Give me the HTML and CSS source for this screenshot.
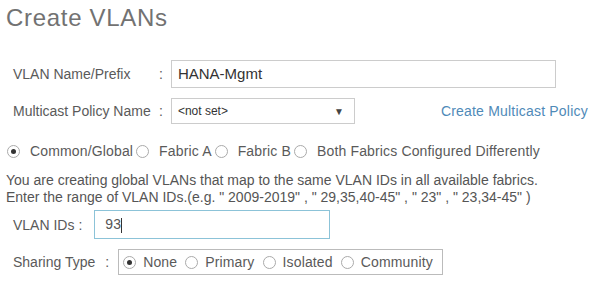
FILE: index.html
```html
<!DOCTYPE html>
<html>
<head>
    <title>Create VLANs</title>
    <link rel="stylesheet" href="styles.css">
</head>
<body>
    <div class="page">
        <h1 class="title">Create VLANs</h1>

        <div class="form-row name-row">
            <span class="field-label wide">VLAN Name/Prefix</span>
            <span class="colon">:</span>
            <div class="text-input name-input">HANA-Mgmt</div>
        </div>

        <div class="form-row policy-row">
            <span class="field-label wide">Multicast Policy Name</span>
            <span class="colon">:</span>
            <div class="select-input">
                <span>&lt;not set&gt;</span>
                <span class="arrow">&#9660;</span>
            </div>
            <a class="link" href="#">Create Multicast Policy</a>
        </div>

        <div class="radio-row scope-row">
            <span class="radio checked"></span><span class="radio-text">Common/Global</span>
            <span class="radio"></span><span class="radio-text">Fabric A</span>
            <span class="radio"></span><span class="radio-text">Fabric B</span>
            <span class="radio"></span><span class="radio-text">Both Fabrics Configured Differently</span>
        </div>

        <p class="note">
            You are creating global VLANs that map to the same VLAN IDs in all available fabrics.<br>
            Enter the range of VLAN IDs.(e.g. " 2009-2019" , " 29,35,40-45" , " 23" , " 23,34-45" )
        </p>

        <div class="form-row ids-row">
            <span class="field-label">VLAN IDs</span>
            <span class="colon">:</span>
            <div class="text-input ids-input">93<span class="caret"></span></div>
        </div>

        <div class="form-row sharing-row">
            <span class="field-label">Sharing Type</span>
            <span class="colon">:</span>
            <div class="radio-box">
                <span class="radio checked"></span><span class="radio-text">None</span>
                <span class="radio"></span><span class="radio-text">Primary</span>
                <span class="radio"></span><span class="radio-text">Isolated</span>
                <span class="radio"></span><span class="radio-text">Community</span>
            </div>
        </div>
    </div>
</body>
</html>
```

FILE: styles.css
```css
body {
    margin: 0;
    background-color: #fff;
    font-family: "Liberation Sans", Arial, sans-serif;
    color: #5a5a5a;
}

.page {
    padding: 0 0 0 6px;
}

.title {
    margin: 0;
    padding-top: 4px;
    font-size: 24px;
    font-weight: normal;
    color: #727272;
    letter-spacing: 0.7px;
    line-height: 28px;
}

.form-row {
    display: flex;
    align-items: center;
    font-size: 14px;
}

.field-label {
    padding-left: 7px;
}

.field-label.wide {
    width: 142px;
}

.colon {
    margin-left: 4px;
}

.text-input {
    height: 26px;
    line-height: 26px;
    border: 1px solid #ccc;
    color: #333;
    padding-left: 6px;
    box-sizing: content-box;
}

.name-row {
    margin-top: 28px;
}

.name-input {
    margin-left: 8px;
    width: 377px;
    font-size: 15px;
}

.policy-row {
    margin-top: 10px;
}

.select-input {
    display: flex;
    justify-content: space-between;
    align-items: center;
    margin-left: 8px;
    width: 166px;
    height: 24px;
    border: 1px solid #ccc;
    padding: 0 10px 0 6px;
    font-size: 12px;
    color: #333;
}

.arrow {
    font-size: 10px;
    color: #444;
}

.link {
    margin-left: 86px;
    color: #4f8ab8;
    text-decoration: none;
    font-size: 14px;
    letter-spacing: 0.2px;
}

.radio-row {
    display: flex;
    align-items: center;
    margin-top: 19px;
    font-size: 14px;
}

.radio {
    width: 11px;
    height: 11px;
    border: 1px solid #aaa;
    border-radius: 50%;
    display: inline-flex;
    align-items: center;
    justify-content: center;
    flex-shrink: 0;
}

.radio.checked::after {
    content: "";
    width: 5px;
    height: 5px;
    border-radius: 50%;
    background-color: #333;
}

.radio-text {
    margin: 0 3px 0 10px;
    letter-spacing: 0.15px;
}

.scope-row {
    padding-left: 1px;
}

.note {
    margin: 13px 0 0 0;
    font-size: 14px;
    line-height: 17px;
    color: #555;
}

.ids-row {
    margin-top: 4px;
}

.ids-input {
    margin-left: 12px;
    width: 224px;
    height: 27px;
    line-height: 27px;
    border-color: #8cc3d8;
    padding-left: 10px;
    font-size: 14px;
    color: #555;
}

.caret {
    display: inline-block;
    width: 1px;
    height: 15px;
    background-color: #333;
    vertical-align: middle;
}

.sharing-row {
    margin-top: 10px;
}

.sharing-row .colon {
    margin-left: 10px;
}

.radio-box {
    display: flex;
    align-items: center;
    margin-left: 9px;
    width: 319px;
    height: 24px;
    border: 1px solid #bbb;
    padding-left: 4px;
}

.radio-box .radio-text {
    margin: 0 8px 0 7px;
}
```
